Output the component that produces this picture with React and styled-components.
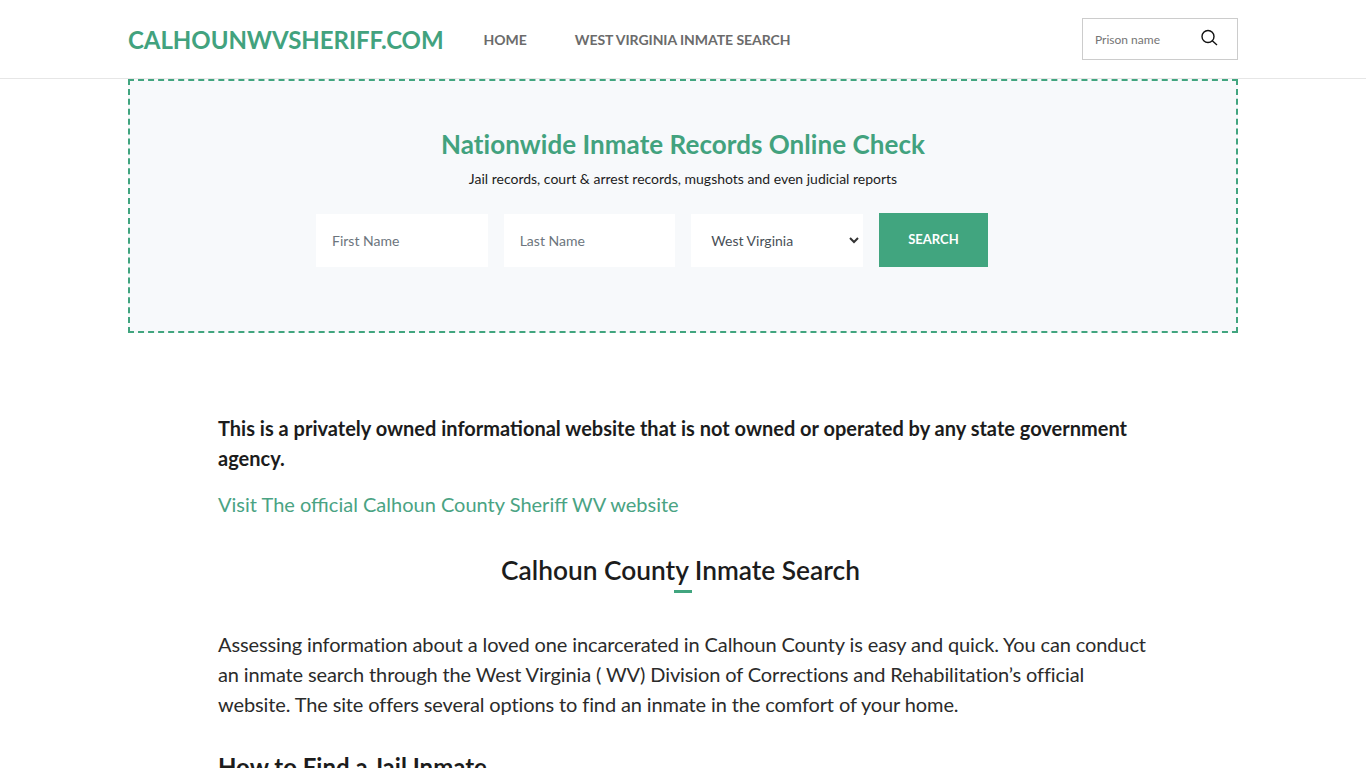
import React from 'react'
import styled, { createGlobalStyle } from 'styled-components'

const Global = createGlobalStyle`
  html, body { margin: 0; padding: 0; background: #fff; }
  body { font-family: Lato, "Liberation Sans", sans-serif; color: #1c1c1c; }
  #root { height: 768px; overflow: hidden; }
  * { box-sizing: border-box; }
`

const Header = styled.header`
  height: 79px;
  border-bottom: 1px solid #e6e6e6;
`
const HeaderInner = styled.div`
  width: 1110px;
  height: 78px;
  margin: 0 auto;
  display: flex;
  align-items: center;
`
const Logo = styled.a`
  font-size: 24px;
  font-weight: 700;
  letter-spacing: -0.05px;
  color: #42a27e;
  margin-right: 40px;
  white-space: nowrap;
`
const Nav = styled.nav`
  display: flex;
  gap: 48px;
`
const NavLink = styled.a`
  font-size: 14px;
  font-weight: 700;
  letter-spacing: -0.05px;
  color: #6b6b6b;
  text-transform: uppercase;
`
const HeaderSearch = styled.div`
  margin-left: auto;
  width: 156px;
  height: 42px;
  border: 1px solid #ccc;
  display: flex;
  align-items: center;
  justify-content: space-between;
  padding: 0 19px 3px 12px;
`
const HeaderPlaceholder = styled.span`
  font-size: 12px;
  color: #757575;
  margin-top: 4px;
`
const Banner = styled.section`
  width: 1110px;
  height: 254px;
  margin: 0 auto;
  background: #f7f9fb;
  border: 2px dashed #41a57f;
  display: flex;
  flex-direction: column;
  align-items: center;
  padding-top: 46px;
`
const BannerTitle = styled.h2`
  margin: 0;
  font-size: 26px;
  line-height: 34px;
  font-weight: 700;
  letter-spacing: 0.05px;
  color: #42a27e;
`
const BannerText = styled.p`
  margin: 8px 0 0;
  font-size: 14px;
  line-height: 20px;
  color: #1c1c1c;
`
const Form = styled.div`
  display: flex;
  gap: 16px;
  align-items: flex-start;
  margin-top: 24px;
  padding-right: 62px;
`
const Field = styled.div`
  width: 171.67px;
  height: 53px;
  margin-top: 1px;
  background: #fff;
  display: flex;
  align-items: center;
  justify-content: space-between;
  padding: ${p => (p.$select ? '0 4px 0 20px' : '0 16px')};
  font-size: 14px;
  color: ${p => (p.$select ? '#495057' : '#6c757d')};
`
const SearchButton = styled.button`
  width: 109px;
  height: 54px;
  border: 0;
  padding: 0 0 2px;
  background: #41a57f;
  color: #fff;
  font-family: inherit;
  font-size: 13px;
  font-weight: 700;
`
const Article = styled.main`
  width: 930px;
  margin: 0 auto;
  padding-top: 80px;
`
const Notice = styled.p`
  margin: 0;
  font-size: 20px;
  line-height: 30px;
  font-weight: 700;
  color: #1c1c1c;
`
const OfficialLink = styled.a`
  display: block;
  margin-top: 16px;
  font-size: 20px;
  line-height: 30px;
  color: #4aa383;
`
const SectionTitle = styled.h2`
  position: relative;
  margin: 35px 0 0;
  text-align: center;
  font-size: 26.3px;
  line-height: 32px;
  font-weight: 600;
  color: #1c1c1c;
  padding-right: 5px;
  &::after {
    content: '';
    position: absolute;
    left: 456px;
    top: 36px;
    width: 18px;
    height: 3px;
    background: #41a57f;
  }
`
const Paragraph = styled.p`
  margin: 43px 0 0;
  font-size: 20px;
  line-height: 30px;
  letter-spacing: -0.12px;
  color: #2b2b2b;
`
const SubTitle = styled.h3`
  margin: 33px 0 0;
  font-size: 24px;
  line-height: 30px;
  font-weight: 700;
  color: #1c1c1c;
`

const SearchIcon = () => (
  <svg width="18" height="18" viewBox="0 0 18 18" fill="none" stroke="#111" strokeWidth="1.4">
    <circle cx="8" cy="7.5" r="6" />
    <path d="M12.3 11.8L17 16" />
  </svg>
)

const Chevron = () => (
  <svg width="10" height="7" viewBox="0 0 10 7" fill="none" stroke="#333" strokeWidth="2">
    <path d="M1 1l4 4 4-4" />
  </svg>
)

export default function App() {
  return (
    <>
      <Global />
      <Header>
        <HeaderInner>
          <Logo>CALHOUNWVSHERIFF.COM</Logo>
          <Nav>
            <NavLink>Home</NavLink>
            <NavLink>West Virginia Inmate Search</NavLink>
          </Nav>
          <HeaderSearch>
            <HeaderPlaceholder>Prison name</HeaderPlaceholder>
            <SearchIcon />
          </HeaderSearch>
        </HeaderInner>
      </Header>
      <Banner>
        <BannerTitle>Nationwide Inmate Records Online Check</BannerTitle>
        <BannerText>Jail records, court &amp; arrest records, mugshots and even judicial reports</BannerText>
        <Form>
          <Field>First Name</Field>
          <Field>Last Name</Field>
          <Field $select>
            West Virginia
            <Chevron />
          </Field>
          <SearchButton>SEARCH</SearchButton>
        </Form>
      </Banner>
      <Article>
        <Notice>This is a privately owned informational website that is not owned or operated by any state government agency.</Notice>
        <OfficialLink>Visit The official Calhoun County Sheriff WV website</OfficialLink>
        <SectionTitle>Calhoun County Inmate Search</SectionTitle>
        <Paragraph>Assessing information about a loved one incarcerated in Calhoun County is easy and quick. You can conduct an inmate search through the West Virginia ( WV) Division of Corrections and Rehabilitation’s official website. The site offers several options to find an inmate in the comfort of your home.</Paragraph>
        <SubTitle>How to Find a Jail Inmate</SubTitle>
      </Article>
    </>
  )
}
